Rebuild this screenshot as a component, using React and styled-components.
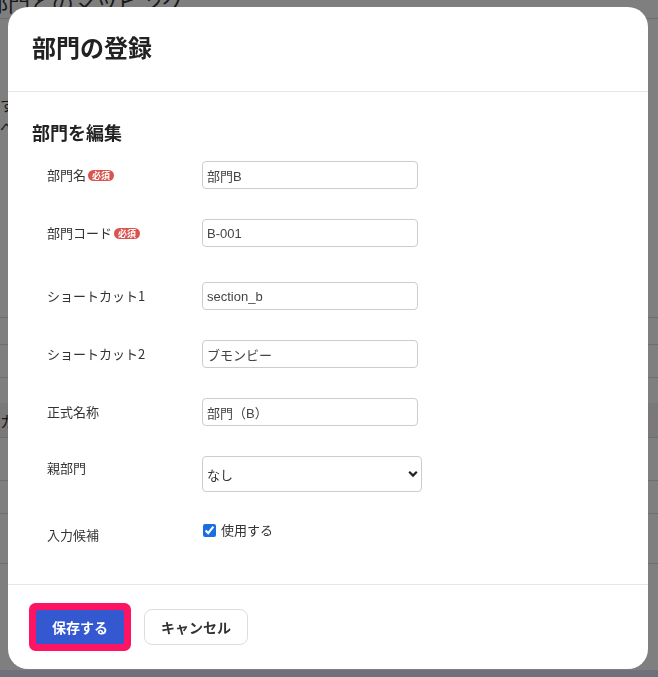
import React from 'react';
import styled, { createGlobalStyle } from 'styled-components';

const GlobalStyle = createGlobalStyle`
body {
  margin: 0;
  font-family: 'Liberation Sans', 'Noto Sans CJK JP', sans-serif;
  background: #ffffff;
}
`

// page that sits behind the dialog
const BackPage = styled.div`
width: 658px;
height: 677px;
overflow: hidden;
display: flex;
flex-direction: column;
background: #ffffff;
`
const BackTitle = styled.div`
height: 19px;
overflow: hidden;
border-bottom: 1px solid #dddddd;
box-sizing: border-box;
`
const BackTitleText = styled.div`
margin-top: -12px;
font-family: 'Noto Sans CJK JP', sans-serif;
font-size: 22px;
line-height: 26px;
color: #333;
white-space: nowrap;
margin-left: -14px;
`
const BackText = styled.div`
padding: ${p => p.pad || '0'};
font-family: 'Noto Sans CJK JP', sans-serif;
font-size: 15px;
line-height: 20px;
color: #333;
height: ${p => p.h}px;
background: ${p => p.bg || 'transparent'};
border-bottom: ${p => p.line ? '1px solid #dddddd' : 'none'};
box-sizing: border-box;
white-space: nowrap;
overflow: hidden;
`
const BackFooter = styled.div`
margin-top: auto;
height: 7px;
background: #dee0f2;
`

const Overlay = styled.div`
position: fixed;
inset: 0;
background: rgba(0, 0, 0, 0.5);
padding: 7px 10px 8px 8px;
box-sizing: border-box;
`
const Modal = styled.div`
width: 640px;
height: 662px;
background: #ffffff;
border-radius: 20px;
display: flex;
flex-direction: column;
overflow: hidden;
font-family: 'Liberation Sans', 'Noto Sans CJK JP', sans-serif;
color: #333;
`
const Header = styled.div`
height: 85px;
box-sizing: border-box;
display: flex;
align-items: center;
padding: 0 24px 5px;
border-bottom: 1px solid #e6e6e6;
`
const Title = styled.h2`
margin: 0;
font-family: 'Noto Sans CJK JP', sans-serif;
font-size: 24px;
font-weight: 700;
color: #222;
`
const Body = styled.div`
padding: 28px 24px 0;
border-bottom: 1px solid #e6e6e6;
`
const SectionTitle = styled.h3`
margin: 0 0 17px;
font-family: 'Noto Sans CJK JP', sans-serif;
font-size: 18px;
line-height: 24px;
font-weight: 700;
color: #222;
`
const Row = styled.div`
display: grid;
grid-template-columns: 155px 1fr;
align-items: start;
height: ${p => p.h}px;
padding-left: 15px;
`
const Label = styled.div`
font-family: 'Noto Sans CJK JP', sans-serif;
font-size: 13px;
line-height: ${p => p.lh || 28}px;
margin-top: ${p => p.mt || 0}px;
color: #333;
display: flex;
align-items: center;
`
const Badge = styled.span`
display: inline-flex;
align-items: center;
justify-content: center;
margin-left: 2px;
height: 11px;
padding: 0 4px;
border-radius: 6px;
background: #d9534f;
color: #fff;
font-size: 9px;
font-weight: 700;
line-height: 11px;
`
const TextInput = styled.input`
box-sizing: border-box;
width: 216px;
height: 28px;
border: 1px solid #cccccc;
border-radius: 4px;
padding: 0 4px;
font-family: 'Liberation Sans', 'Noto Sans CJK JP', sans-serif;
font-size: 13px;
color: #444;
outline: none;
`
const SelectWrap = styled.div`
position: relative;
width: 220px;
height: 36px;
`
const Select = styled.select`
appearance: none;
box-sizing: border-box;
width: 220px;
height: 36px;
border: 1px solid #cccccc;
border-radius: 4px;
padding: 0 4px;
background: #fff;
font-family: 'Noto Sans CJK JP', sans-serif;
font-size: 13px;
color: #333;
`
const Chevron = styled.svg`
position: absolute;
right: 4px;
top: 14px;
pointer-events: none;
`
const CheckLine = styled.label`
display: flex;
align-items: center;
gap: 5px;
line-height: 20px;
font-family: 'Noto Sans CJK JP', sans-serif;
font-size: 13px;
color: #333;
`
const Check = styled.input`
margin: 0 0 0 1px;
width: 13px;
height: 13px;
accent-color: #1a6fe0;
`
const Footer = styled.div`
flex: 1;
display: flex;
align-items: flex-start;
gap: 20px;
padding: 24px 28px 0;
`
const Button = styled.button`
box-sizing: border-box;
height: ${p => p.primary ? 34 : 36}px;
margin-top: ${p => p.primary ? 1 : 0}px;
padding: 0;
width: ${p => p.primary ? 88 : 104}px;
border-radius: ${p => p.primary ? 2 : 8}px;
border: ${p => p.primary ? 'none' : '1px solid #dddddd'};
background: ${p => p.primary ? '#3358d0' : '#ffffff'};
color: ${p => p.primary ? '#ffffff' : '#333'};
box-shadow: ${p => p.primary ? '0 0 0 7px #ff1463' : 'none'};
font-family: 'Noto Sans CJK JP', sans-serif;
font-size: 14px;
font-weight: 700;
`

const fields = [
    { label: '部門名', required: true, value: '部門B', h: 58 },
    { label: '部門コード', required: true, value: 'B-001', h: 63 },
    { label: 'ショートカット1', value: 'section_b', h: 58 },
    { label: 'ショートカット2', value: 'ブモンビー', h: 58 },
    { label: '正式名称', value: '部門（B）', h: 58 },
]

const App = () => {
    return (
        <>
            <GlobalStyle />
            <BackPage>
                <BackTitle>
                    <BackTitleText>部門とのマッピング</BackTitleText>
                </BackTitle>
                <BackText h={98} pad="76px 0 0 0">す</BackText>
                <BackText h={201} line>へ</BackText>
                <BackText h={27} line />
                <BackText h={33} line />
                <BackText h={25} />
                <BackText h={35} bg="#f4f0f0" pad="8px 0 0 0" line>カ</BackText>
                <BackText h={43} line />
                <BackText h={33} line />
                <BackText h={50} line />
                <BackFooter />
            </BackPage>
            <Overlay>
                <Modal>
                    <Header>
                        <Title>部門の登録</Title>
                    </Header>
                    <Body>
                        <SectionTitle>部門を編集</SectionTitle>
                        {fields.map(f => (
                            <Row key={f.label} h={f.h}>
                                <Label>
                                    {f.label}
                                    {f.required && <Badge>必須</Badge>}
                                </Label>
                                <TextInput defaultValue={f.value} />
                            </Row>
                        ))}
                        <Row h={64}>
                            <Label lh={24}>親部門</Label>
                            <SelectWrap>
                                <Select defaultValue="none">
                                    <option value="none">なし</option>
                                </Select>
                                <Chevron width="10" height="8" viewBox="0 0 10 8">
                                    <path d="M1.2 1.8 L5 5.6 L8.8 1.8" fill="none" stroke="#222" strokeWidth="2.2" />
                                </Chevron>
                            </SelectWrap>
                        </Row>
                        <Row h={64}>
                            <Label lh={20} mt={5}>入力候補</Label>
                            <CheckLine>
                                <Check type="checkbox" defaultChecked />
                                使用する
                            </CheckLine>
                        </Row>
                    </Body>
                    <Footer>
                        <Button primary>保存する</Button>
                        <Button>キャンセル</Button>
                    </Footer>
                </Modal>
            </Overlay>
        </>
    )
}

export default App
